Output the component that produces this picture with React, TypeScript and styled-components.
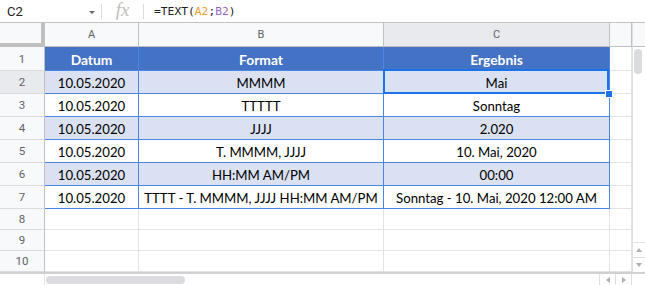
import React from 'react';
import styled, { createGlobalStyle, css } from 'styled-components';

const GlobalStyle = createGlobalStyle`
  html, body {
    margin: 0;
    padding: 0;
    background: #fff;
    overflow: hidden;
  }
  * { box-sizing: border-box; }
`;

const Page = styled.div`
  width: 645px;
  height: 285px;
  display: flex;
  flex-direction: column;
  font-family: Roboto, 'Liberation Sans', sans-serif;
`;

const FormulaBar = styled.div`
  height: 23px;
  display: flex;
  align-items: center;
  border-bottom: 1px solid #c4c4c4;
`;

const NameBox = styled.div`
  width: 101px;
  display: flex;
  align-items: center;
  justify-content: space-between;
  padding: 0 6px 0 7px;
  font-size: 13px;
  color: #202124;
`;

const Caret = styled.span`
  width: 0;
  height: 0;
  border-left: 3.5px solid transparent;
  border-right: 3.5px solid transparent;
  border-top: 3.5px solid #666;
  margin-top: 2px;
`;

const Divider = styled.span`
  width: 1px;
  height: 15px;
  background: #dadce0;
`;

const FxLabel = styled.div`
  width: 41px;
  text-align: center;
  font-family: 'Liberation Serif', serif;
  font-style: italic;
  font-size: 19px;
  color: #c0c0c0;
  line-height: 1;
  margin-top: -3px;
`;

const Formula = styled.div`
  padding-left: 10px;
  font-family: 'DejaVu Sans Mono', monospace;
  font-size: 11.3px;
  color: #202124;
`;

const Ref = styled.span<{ tone: string }>`
  color: ${({ tone }) => tone};
`;

const Body = styled.div`
  display: flex;
  flex: 1;
`;

const Grid = styled.div`
  display: grid;
  grid-template-columns: 45px 94px 245px 226px 22px;
  grid-template-rows: 24px 24px repeat(6, 23px) repeat(3, 21px);
`;

const Corner = styled.div`
  background: #f8f9fa;
  border-right: 4px solid #c0c0c0;
  border-bottom: 4px solid #c0c0c0;
`;

const ColHeader = styled.div<{ active?: boolean }>`
  display: flex;
  align-items: center;
  justify-content: center;
  font-size: 11px;
  color: #5f6368;
  background: ${({ active }) => (active ? '#e8eaed' : '#f8f9fa')};
  border-right: 1px solid #c0c0c0;
  border-bottom: 1px solid #c0c0c0;
`;

const RowHeader = styled.div<{ active?: boolean }>`
  display: flex;
  align-items: center;
  justify-content: center;
  font-size: 11.5px;
  color: #5f6368;
  background: ${({ active }) => (active ? '#e8eaed' : '#f8f9fa')};
  border-right: 1px solid #c0c0c0;
  border-bottom: 1px solid #dadce0;
`;

type Kind = 'head' | 'band' | 'plain' | 'empty';

const Cell = styled.div<{ kind: Kind; selected?: boolean }>`
  position: relative;
  display: flex;
  align-items: center;
  justify-content: center;
  white-space: nowrap;
  font-family: Lato, 'Open Sans', sans-serif;
  font-size: 13.2px;
  color: #000;
  padding-top: 1px;
  border-right: 1px solid #4a86e8;
  border-bottom: 1px solid #4a86e8;
  ${({ kind }) =>
    kind === 'head' &&
    css`
      background: #4472c4;
      color: #fff;
      font-weight: 700;
      font-size: 13.8px;
    `}
  ${({ kind }) => kind === 'band' && css`background: #d9e1f2;`}
  ${({ kind }) => kind === 'plain' && css`background: #fff;`}
  ${({ kind }) =>
    kind === 'empty' &&
    css`
      background: #fff;
      border-right-color: #e2e3e3;
      border-bottom-color: #e2e3e3;
    `}
  ${({ selected }) =>
    selected &&
    css`
      &::after {
        content: '';
        position: absolute;
        top: -2px;
        left: -1px;
        right: 0;
        bottom: -1px;
        border: 2px solid #1a73e8;
      }
      &::before {
        content: '';
        position: absolute;
        right: -3px;
        bottom: -4px;
        width: 6px;
        height: 6px;
        background: #1a73e8;
        outline: 1px solid #fff;
        z-index: 2;
      }
    `}
`;

const VScroll = styled.div`
  width: 13px;
  display: flex;
  flex-direction: column;
  border-left: 1px solid #e0e0e0;
`;

const VScrollHead = styled.div`
  height: 24px;
  background: #f8f9fa;
  border-bottom: 1px solid #c0c0c0;
`;

const VTrack = styled.div`
  flex: 1;
  padding: 2px 0 0 1px;
`;

const VThumb = styled.div`
  width: 8px;
  height: 25px;
  border-radius: 4px;
  background: #dadce0;
`;

const ArrowBtn = styled.div`
  height: 15px;
  display: flex;
  align-items: center;
  justify-content: center;
  border-top: 1px solid #e0e0e0;
`;

const Tri = styled.span<{ dir: 'up' | 'down' | 'left' | 'right' }>`
  width: 0;
  height: 0;
  ${({ dir }) =>
    dir === 'up' &&
    css`
      border-left: 3px solid transparent;
      border-right: 3px solid transparent;
      border-bottom: 4px solid #b0b0b0;
    `}
  ${({ dir }) =>
    dir === 'down' &&
    css`
      border-left: 3px solid transparent;
      border-right: 3px solid transparent;
      border-top: 4px solid #b0b0b0;
    `}
  ${({ dir }) =>
    dir === 'left' &&
    css`
      border-top: 3px solid transparent;
      border-bottom: 3px solid transparent;
      border-right: 4px solid #b0b0b0;
    `}
  ${({ dir }) =>
    dir === 'right' &&
    css`
      border-top: 3px solid transparent;
      border-bottom: 3px solid transparent;
      border-left: 4px solid #b0b0b0;
    `}
`;

const HScroll = styled.div`
  height: 13px;
  display: flex;
  border-top: 2px solid #d0d0d0;
`;

const HLead = styled.div`
  width: 45px;
  background: #fff;
  border-right: 1px solid #e0e0e0;
`;

const HTrack = styled.div`
  flex: 1;
  padding: 2px 0 0 1px;
`;

const HThumb = styled.div`
  width: 139px;
  height: 8px;
  border-radius: 4px;
  background: #dadce0;
`;

const HArrow = styled.div`
  width: 16px;
  display: flex;
  align-items: center;
  justify-content: center;
  border-left: 1px solid #e0e0e0;
`;

const HCorner = styled.div`
  width: 14px;
  border-left: 1px solid #e0e0e0;
  background: #fff;
`;

const rows: [string, string, string][] = [
  ['10.05.2020', 'MMMM', 'Mai'],
  ['10.05.2020', 'TTTTT', 'Sonntag'],
  ['10.05.2020', 'JJJJ', '2.020'],
  ['10.05.2020', 'T. MMMM, JJJJ', '10. Mai, 2020'],
  ['10.05.2020', 'HH:MM AM/PM', '00:00'],
  ['10.05.2020', 'TTTT - T. MMMM, JJJJ HH:MM AM/PM', 'Sonntag - 10. Mai, 2020 12:00 AM'],
];

export default function App() {
  return (
    <Page>
      <GlobalStyle />
      <FormulaBar>
        <NameBox>
          <span>C2</span>
          <Caret />
        </NameBox>
        <Divider />
        <FxLabel>fx</FxLabel>
        <Divider />
        <Formula>
          =TEXT(<Ref tone="#f0a030">A2</Ref>;<Ref tone="#9a63c9">B2</Ref>)
        </Formula>
      </FormulaBar>
      <Body>
        <Grid>
          <Corner />
          <ColHeader>A</ColHeader>
          <ColHeader>B</ColHeader>
          <ColHeader active>C</ColHeader>
          <ColHeader />

          <RowHeader>1</RowHeader>
          <Cell kind="head">Datum</Cell>
          <Cell kind="head">Format</Cell>
          <Cell kind="head">Ergebnis</Cell>
          <Cell kind="empty" />

          {rows.map((r, i) => {
            const kind: Kind = i % 2 === 0 ? 'band' : 'plain';
            return (
              <React.Fragment key={i}>
                <RowHeader active={i === 0}>{i + 2}</RowHeader>
                <Cell kind={kind}>{r[0]}</Cell>
                <Cell kind={kind}>{r[1]}</Cell>
                <Cell kind={kind} selected={i === 0}>
                  {r[2]}
                </Cell>
                <Cell kind="empty" />
              </React.Fragment>
            );
          })}

          {[8, 9, 10].map((n) => (
            <React.Fragment key={n}>
              <RowHeader>{n}</RowHeader>
              <Cell kind="empty" />
              <Cell kind="empty" />
              <Cell kind="empty" />
              <Cell kind="empty" />
            </React.Fragment>
          ))}
        </Grid>
        <VScroll>
          <VScrollHead />
          <VTrack>
            <VThumb />
          </VTrack>
          <ArrowBtn>
            <Tri dir="up" />
          </ArrowBtn>
          <ArrowBtn>
            <Tri dir="down" />
          </ArrowBtn>
        </VScroll>
      </Body>
      <HScroll>
        <HLead />
        <HTrack>
          <HThumb />
        </HTrack>
        <HArrow>
          <Tri dir="left" />
        </HArrow>
        <HArrow>
          <Tri dir="right" />
        </HArrow>
        <HCorner />
      </HScroll>
    </Page>
  );
}
